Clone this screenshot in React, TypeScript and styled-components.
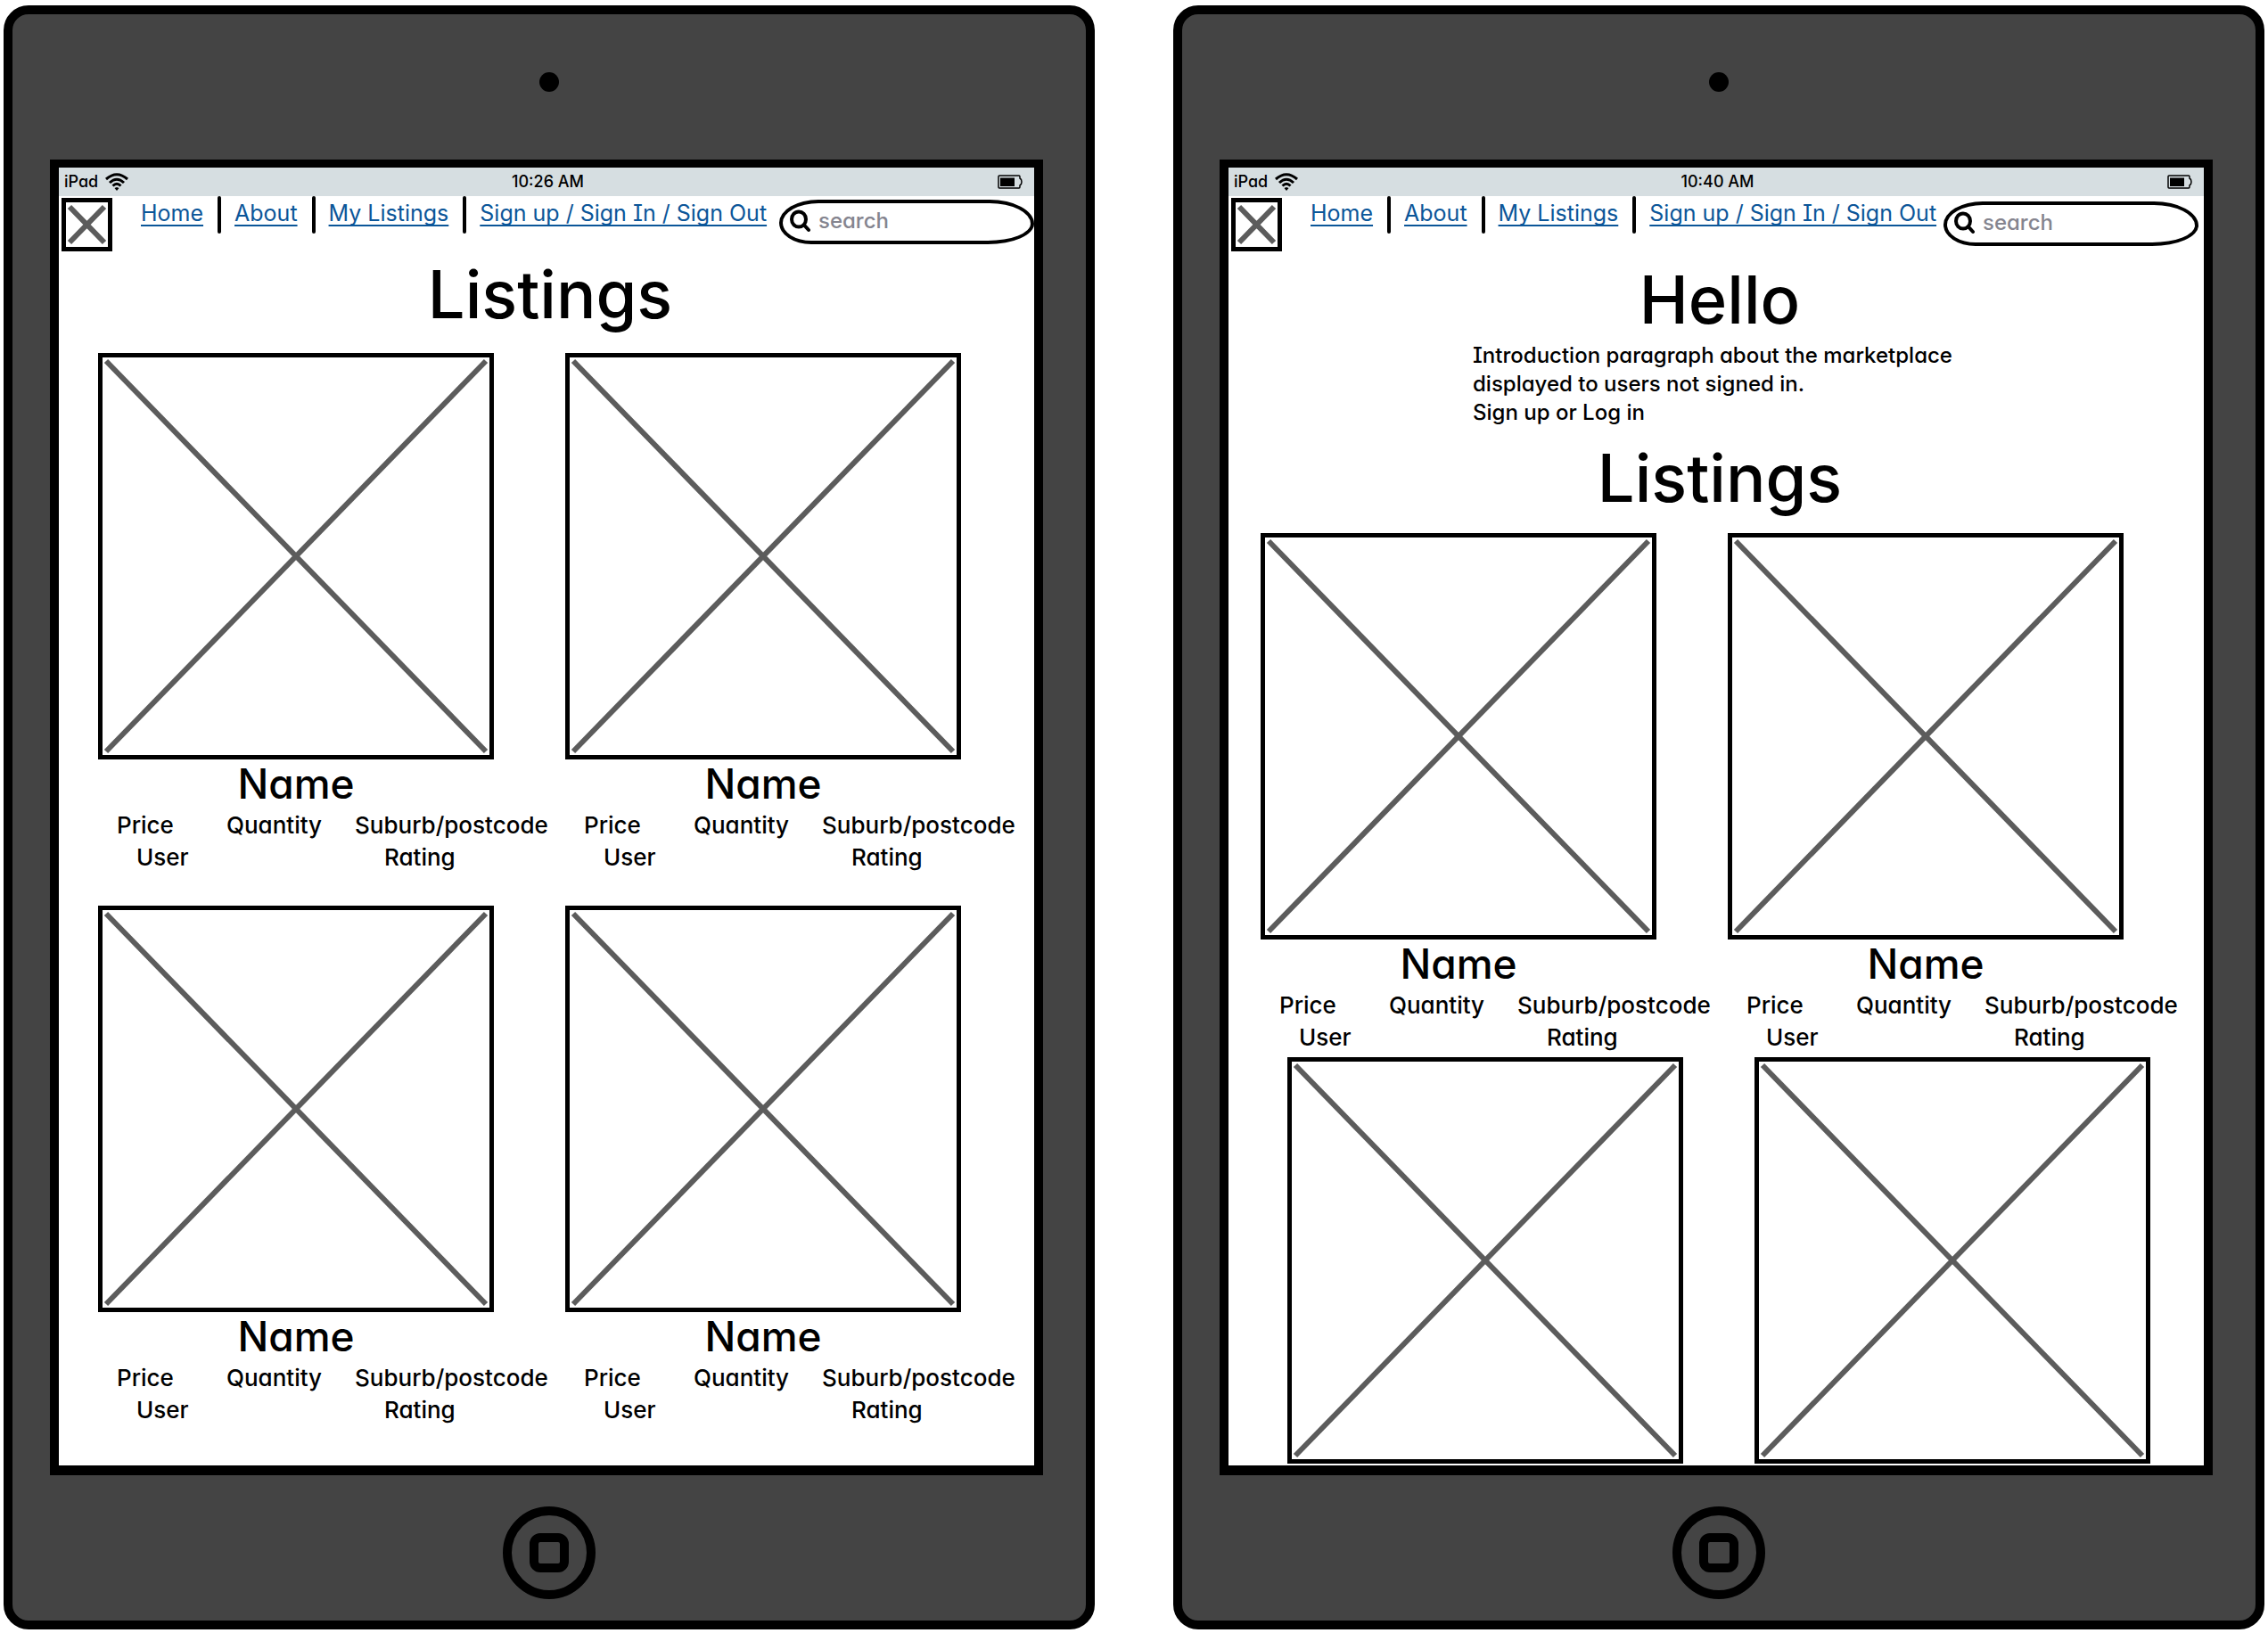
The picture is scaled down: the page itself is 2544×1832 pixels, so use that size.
import React from "react";
import styled, { createGlobalStyle } from "styled-components";

const GlobalStyle = createGlobalStyle`
  *, *::before, *::after { box-sizing: border-box; }
  body {
    margin: 0;
    background: #ffffff;
    color: #000000;
    font-family: Inter, "Liberation Sans", sans-serif;
    font-weight: 500;
    font-feature-settings: "cv11", "cv08", "ss03";
  }
  h1, h2, p { margin: 0; }
`;

const Board = styled.main`
  display: flex;
  gap: 88px;
  min-height: 100vh;
  padding: 6px 4px 4px;
`;

const Device = styled.section`
  flex: 1 1 0;
  min-width: 0;
  display: flex;
  flex-direction: column;
  padding: 0 48px 0 42px;
  border: 10px solid #000000;
  border-radius: 28px;
  background: #444444;
`;

const Bezel = styled.div<{ $edge: "top" | "bottom" }>`
  display: flex;
  align-items: center;
  justify-content: center;
  height: 163px;
  padding: ${(p) => (p.$edge === "top" ? "0 0 11px 6px" : "11px 0 0 6px")};
`;

const Camera = styled.span`
  width: 22px;
  height: 22px;
  border-radius: 50%;
  background: #000000;
`;

const HomeButton = styled.button`
  display: flex;
  align-items: center;
  justify-content: center;
  width: 104px;
  height: 104px;
  padding: 0;
  border: 10px solid #000000;
  border-radius: 50%;
  background: transparent;
`;

const HomeSquare = styled.span`
  width: 44px;
  height: 44px;
  border: 10px solid #000000;
  border-radius: 12px;
`;

const Screen = styled.div`
  flex: 1;
  border: solid #000000;
  border-width: 9px 10px 11px;
  background: #ffffff;
`;

const StatusBar = styled.div`
  display: grid;
  grid-template-columns: 1fr auto 1fr;
  align-items: center;
  height: 32px;
  padding: 0 13px 0 6px;
  background: #d6dee1;
  font-size: 18px;
  line-height: 30px;
`;

const Carrier = styled.span`
  display: flex;
  align-items: center;
  gap: 8px;
`;

const Clock = styled.span`
  padding-left: 10px;
`;

const BatterySlot = styled.span`
  display: flex;
  justify-content: flex-end;
`;

const Header = styled.header`
  display: flex;
  align-items: flex-start;
  height: 68px;
`;

const Logo = styled.a`
  display: block;
  flex: none;
  width: 57px;
  height: 60px;
  margin: 2px 32px 0 3px;
  border: 5px solid #000000;
`;

const Cross = styled.svg`
  display: block;
  width: 100%;
  height: 100%;
  overflow: visible;
  stroke: #5c5c5c;
`;

const Nav = styled.nav`
  display: flex;
  gap: 16px;
  white-space: nowrap;
`;

const NavLink = styled.a`
  color: #0b5699;
  font-size: 25px;
  font-weight: 400;
  line-height: 38px;
  text-decoration: underline;
  text-decoration-thickness: 2px;
  text-underline-offset: 4px;
  text-decoration-skip-ink: none;

  & + &::before {
    content: "";
    display: inline-block;
    width: 4px;
    height: 42px;
    margin-right: 15px;
    border-radius: 2px;
    background: #000000;
    vertical-align: top;
  }
`;

const SearchBox = styled.label<{ $top: number; $right: number }>`
  display: flex;
  align-items: center;
  flex: none;
  gap: 8px;
  width: 286px;
  height: 50px;
  margin: ${(p) => p.$top}px ${(p) => p.$right}px 0 auto;
  padding: 0 8px 2px;
  border: 4px solid #000000;
  border-radius: 44px 50px 52px 36px / 26px 27px 23px 24px;
`;

const SearchInput = styled.input`
  flex: 1;
  min-width: 0;
  padding: 0;
  border: 0;
  outline: 0;
  background: transparent;
  font: inherit;
  font-feature-settings: inherit;
  font-size: 24px;
  line-height: 32px;

  &::placeholder {
    color: #85858f;
    opacity: 1;
  }
`;

const Title = styled.h1<{ $top: number }>`
  margin-top: ${(p) => p.$top}px;
  padding-left: 8px;
  font-size: 74px;
  font-weight: 500;
  line-height: 82px;
  text-align: center;
`;

const Intro = styled.p`
  width: 560px;
  margin: 6px auto 0;
  padding-left: 7px;
  font-size: 24px;
  line-height: 32px;
`;

const CardRow = styled.div<{ $top: number; $left: number; $right: number }>`
  display: grid;
  grid-template-columns: 1fr 1fr;
  gap: 80px;
  margin-top: ${(p) => p.$top}px;
  padding: 0 ${(p) => p.$right}px 0 ${(p) => p.$left}px;
`;

const Card = styled.article`
  min-width: 0;
`;

const Picture = styled.div`
  aspect-ratio: 444 / 456;
  padding: 4px;
  border: 5px solid #000000;
`;

const Name = styled.h2`
  margin-top: 2px;
  font-size: 46px;
  font-weight: 500;
  line-height: 50px;
  text-align: center;
`;

const Facts = styled.div`
  padding-top: 4px;
  font-size: 26px;
  line-height: 36px;
  white-space: nowrap;
`;

const FactRow = styled.div<{ $indent: number; $columns: string }>`
  display: grid;
  grid-template-columns: ${(p) => p.$columns};
  padding-left: ${(p) => p.$indent}px;
`;

const CrossLines = ({ weight }: { weight: number }) => (
  <Cross viewBox="0 0 100 100" preserveAspectRatio="none" strokeWidth={weight} aria-hidden="true">
    <line x1="0" y1="0" x2="100" y2="100" vectorEffect="non-scaling-stroke" />
    <line x1="100" y1="0" x2="0" y2="100" vectorEffect="non-scaling-stroke" />
  </Cross>
);

const LogoCross = () => (
  <Cross viewBox="0 0 47 50" strokeWidth="6" aria-hidden="true">
    <path d="M4 5 L43 45 M43 5 L4 45" />
  </Cross>
);

const WifiIcon = () => (
  <svg width="26" height="20" viewBox="0 0 26 20" fill="none" stroke="#000" strokeWidth="3" aria-hidden="true">
    <path d="M1 7 Q13 -3.500 25 7" />
    <path d="M5 11 Q13 3.500 21 11" />
    <path d="M8.500 14.500 Q13 10 17.500 14.500" />
    <path d="M10.500 17 L13 16 L15.500 17 L13 20 Z" fill="#000" stroke="none" />
  </svg>
);

const BatteryIcon = () => (
  <svg width="28" height="16" viewBox="0 0 28 16" aria-hidden="true">
    <path
      d="M2 1 H24 Q25 1 25 2.500 V4 Q27 5 27 8 Q27 11 25 12 V13.500 Q25 15 24 15 H2 Q1 15 1 14 V2 Q1 1 2 1 Z"
      fill="none"
      stroke="#000"
      strokeWidth="1.500"
    />
    <rect x="3" y="3.500" width="16" height="9.500" />
  </svg>
);

const SearchIcon = () => (
  <svg width="24" height="26" viewBox="0 0 24 26" fill="none" stroke="#000" strokeWidth="4" strokeLinecap="round" aria-hidden="true">
    <ellipse cx="10" cy="11" rx="8" ry="8.500" />
    <path d="M16 17.500 L21 23" />
  </svg>
);

const links = ["Home", "About", "My Listings", "Sign up / Sign In / Sign Out"];

const Listing = ({ captioned = true }: { captioned?: boolean }) => (
  <Card>
    <Picture>
      <CrossLines weight={6} />
    </Picture>
    {captioned && (
      <>
        <Name>Name</Name>
        <Facts>
          <FactRow $indent={21} $columns="123px 144px auto">
            <span>Price</span>
            <span>Quantity</span>
            <span>Suburb/postcode</span>
          </FactRow>
          <FactRow $indent={43} $columns="278px auto">
            <span>User</span>
            <span>Rating</span>
          </FactRow>
        </Facts>
      </>
    )}
  </Card>
);

interface TabletProps {
  time: string;
  searchTop: number;
  searchRight: number;
  children: React.ReactNode;
}

const Tablet = ({ time, searchTop, searchRight, children }: TabletProps) => (
  <Device>
    <Bezel $edge="top">
      <Camera />
    </Bezel>
    <Screen>
      <StatusBar>
        <Carrier>
          iPad <WifiIcon />
        </Carrier>
        <Clock>{time}</Clock>
        <BatterySlot>
          <BatteryIcon />
        </BatterySlot>
      </StatusBar>
      <Header>
        <Logo href="#" aria-label="Logo">
          <LogoCross />
        </Logo>
        <Nav>
          {links.map((text) => (
            <NavLink key={text} href="#">
              {text}
            </NavLink>
          ))}
        </Nav>
        <SearchBox $top={searchTop} $right={searchRight}>
          <SearchIcon />
          <SearchInput type="text" placeholder="search" aria-label="search" />
        </SearchBox>
      </Header>
      {children}
    </Screen>
    <Bezel $edge="bottom">
      <HomeButton aria-label="Home button">
        <HomeSquare />
      </HomeButton>
    </Bezel>
  </Device>
);

export default function App() {
  return (
    <>
      <GlobalStyle />
      <Board>
        <Tablet time="10:26 AM" searchTop={4} searchRight={0}>
          <Title $top={1}>Listings</Title>
          <CardRow $top={25} $left={44} $right={82}>
            <Listing />
            <Listing />
          </CardRow>
          <CardRow $top={36} $left={44} $right={82}>
            <Listing />
            <Listing />
          </CardRow>
        </Tablet>
        <Tablet time="10:40 AM" searchTop={6} searchRight={6}>
          <Title $top={7}>Hello</Title>
          <Intro>
            Introduction paragraph about the marketplace displayed to users not signed in.
            <br />
            Sign up or Log in
          </Intro>
          <Title $top={16}>Listings</Title>
          <CardRow $top={21} $left={36} $right={90}>
            <Listing />
            <Listing />
          </CardRow>
          <CardRow $top={4} $left={66} $right={60}>
            <Listing captioned={false} />
            <Listing captioned={false} />
          </CardRow>
        </Tablet>
      </Board>
    </>
  );
}
